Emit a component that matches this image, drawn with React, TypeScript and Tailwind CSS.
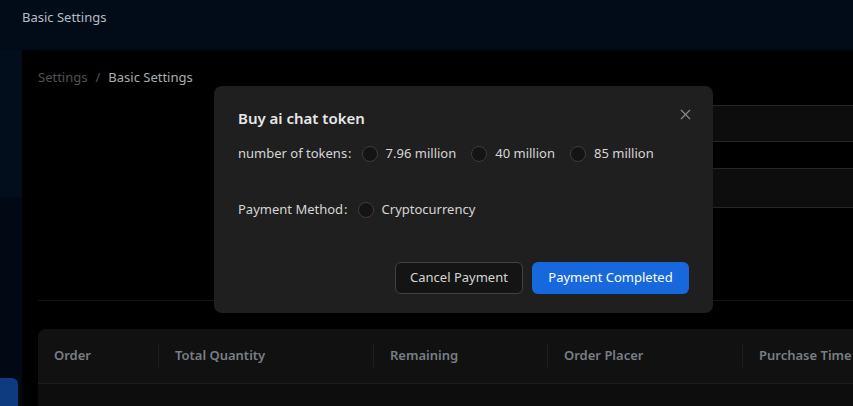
import { X } from "lucide-react";

const columns = [
  { label: "Order", w: "w-[120px]" },
  { label: "Total Quantity", w: "w-[215px]" },
  { label: "Remaining", w: "w-[174px]" },
  { label: "Order Placer", w: "w-[195px]" },
  { label: "Purchase Time", w: "w-[160px]" },
];

function Radio({ label }: { label: string }) {
  return (
    <label className="flex items-center gap-2 mr-[15px] cursor-pointer">
      <span className="w-4 h-4 rounded-full border border-[#3c3c3c] bg-[#141414]" />
      <span className="text-[#d6d6d6]">{label}</span>
    </label>
  );
}

export default function App() {
  return (
    <div
      className="relative w-[853px] h-[406px] overflow-hidden bg-[#020c18] text-[13px]"
      style={{ fontFamily: '"Noto Sans", "Open Sans", sans-serif' }}
    >
      {/* top bar */}
      <div className="h-[50px] flex items-center px-[22px] pb-[14px] text-[#b7bcc4]">
        Basic Settings
      </div>

      <div className="flex h-[356px]">
        {/* sidebar strip */}
        <div className="w-[22px] shrink-0 flex flex-col">
          <div className="h-[147px] bg-[#020e1b]" />
          <div className="flex-1 bg-[#010a14] flex flex-col justify-end">
            <div className="h-[28px] w-[18px] bg-[#0e3a80] rounded-tr-md" />
          </div>
        </div>

        {/* main */}
        <div className="flex-1 min-w-0 bg-black pl-4 pt-[18px] flex flex-col">
          <div className="flex items-center gap-2 text-[#4f5257]">
            <span>Settings</span>
            <span>/</span>
            <span className="text-[#a9adb3]">Basic Settings</span>
          </div>

          <div className="flex flex-col items-end mt-[17px]">
            <div className="w-[400px] h-[37px] bg-[#0d0d0d] border-y border-[#262626]" />
            <div className="w-[400px] h-[40px] mt-[26px] bg-[#0d0d0d] border-y border-[#262626]" />
          </div>

          <div className="mt-[92px] h-px bg-[#141414]" />

          <div className="mt-[28px] flex-1 bg-[#0d0d0d] rounded-tl-lg overflow-hidden">
            <div className="h-[55px] bg-[#111111] border-b border-[#1c1c1c] flex items-center font-semibold text-[#797e85]">
              {columns.map((c, i) => (
                <div key={c.label} className={`${c.w} shrink-0 flex items-center h-[23px] px-4 ${i > 0 ? "border-l border-[#1f1f1f]" : ""}`}>
                  <span className="whitespace-nowrap">{c.label}</span>
                </div>
              ))}
            </div>
          </div>
        </div>
      </div>

      {/* modal */}
      <div className="absolute left-[214px] top-[86px] w-[499px] h-[227px] bg-[#1f1f1f] rounded-lg px-6 pt-[20px] pb-[19px] flex flex-col">
        <button className="absolute right-[19px] top-[20px] text-[#8c8c8c]">
          <X size={17} strokeWidth={1.5} />
        </button>
        <div className="text-[15px] font-semibold text-[#e8e8e8] leading-6">Buy ai chat token</div>

        <div className="flex items-center mt-[12px] h-[24px] text-[#d6d6d6]">
          <span>number of tokens</span>
          <span className="ml-px mr-[10px]">:</span>
          <Radio label="7.96 million" />
          <Radio label="40 million" />
          <Radio label="85 million" />
        </div>

        <div className="flex items-center mt-[32px] h-[24px] text-[#d6d6d6]">
          <span>Payment Method</span>
          <span className="ml-px mr-[10px]">:</span>
          <Radio label="Cryptocurrency" />
        </div>

        <div className="mt-auto flex justify-end gap-[9px]">
          <button className="h-[32px] w-[128px] rounded-md border border-[#424242] bg-[#141414] text-[#d4d4d4]">
            Cancel Payment
          </button>
          <button className="h-[32px] w-[157px] rounded-md bg-[#1668dc] text-white">
            Payment Completed
          </button>
        </div>
      </div>
    </div>
  );
}
